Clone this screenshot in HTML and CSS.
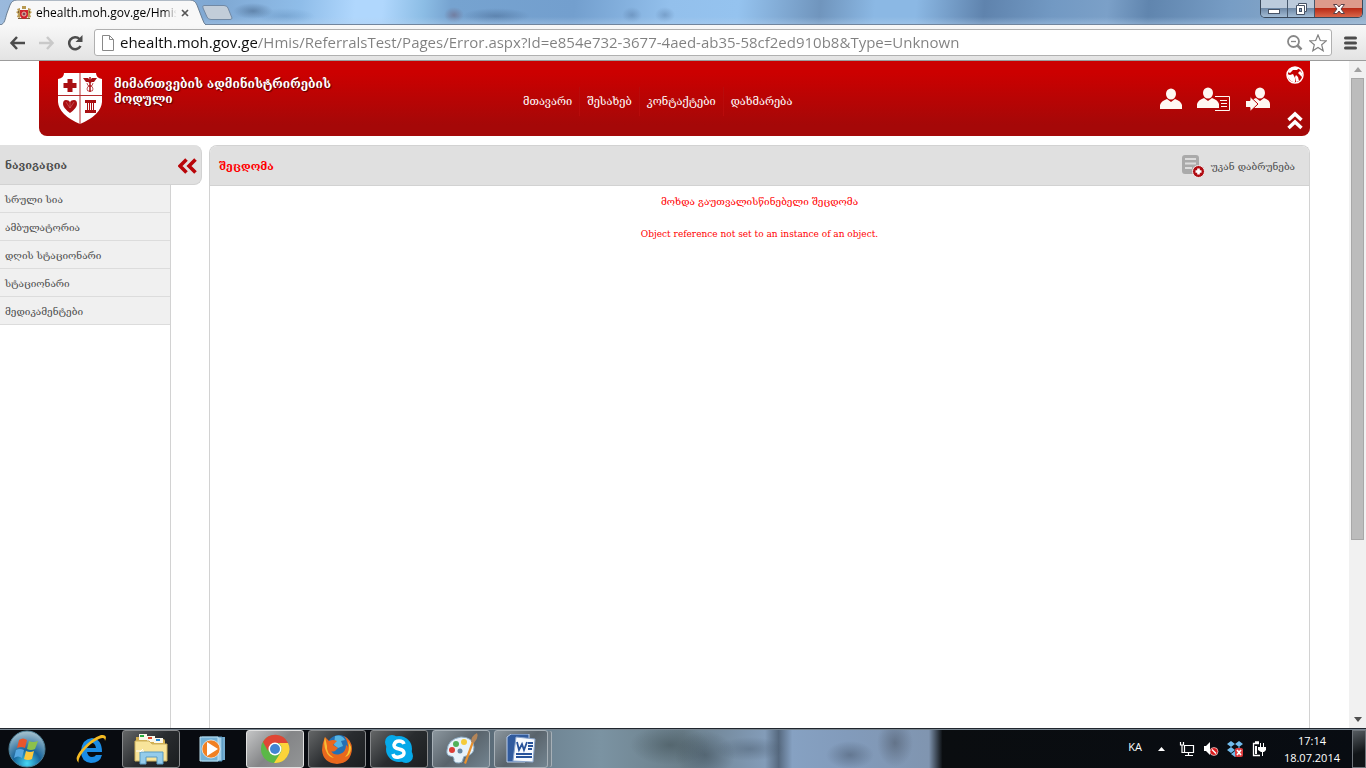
FILE: index.html
```html
<!DOCTYPE html>
<html lang="ka">
<head>
    <meta charset="UTF-8">
    <meta name="viewport" content="width=device-width, initial-scale=1.0">
    <title>ehealth.moh.gov.ge/Hmis</title>
    <link rel="stylesheet" href="styles.css">
</head>
<body>
    <!-- tab strip -->
    <div class="titlebar">
        <div class="tab">
            <svg class="tab-shape" viewBox="0 0 206 25" preserveAspectRatio="none">
                <path d="M0 25 C5 24 5 19 7 13 L10 5 Q12 0 17 0 H190 Q195 0 197 5 L202 18 Q204 24 206 25" fill="#f8f8f8" stroke="#697d92"/>
            </svg>
            <svg class="favicon" width="16" height="16" viewBox="0 0 16 16">
                <path d="M6 1h4v3H6zM1 4l3-1v10l-3-1 1-3-2-2 2-1zM15 4l-3-1v10l3-1-1-3 2-2-2-1z" fill="#b99a52"/>
                <path d="M2 6v2h1V6zm11 0v2h1V6zM2 13h12v1H2z" fill="#7c5c3c"/>
                <path d="M4 5h8v5q0 3-4 4-4-1-4-4z" fill="#d0232e"/>
                <circle cx="8" cy="9" r="2" fill="#7d4a58" stroke="#efb7a7"/>
            </svg>
            <span class="tab-title">ehealth.moh.gov.ge/Hmis</span>
            <button class="tab-close" aria-label="Close tab">
                <svg width="8" height="8" viewBox="0 0 8 8"><path d="M1 1l6 6M7 1L1 7" stroke="#555" stroke-width="1.700"/></svg>
            </button>
        </div>
        <button class="new-tab" aria-label="New tab">
            <svg width="32" height="15" viewBox="0 0 32 15"><path d="M2 .5H22Q25 .5 26 3L30 13Q30 14.500 28 14.500H9Q6 14.500 5 12L1 3Q0 .5 2 .5Z" fill="#c2cdd9" stroke="#7189a5"/></svg>
        </button>
        <div class="window-buttons">
            <button aria-label="Minimize"><svg width="14" height="14" viewBox="0 0 14 14"><rect x="1.500" y="7.500" width="11" height="4" fill="#fff" stroke="#475366"/></svg></button>
            <button aria-label="Restore"><svg width="14" height="14" viewBox="0 0 14 14"><path d="M4.500 1.500h8v8h-2v3h-8v-9h2z" fill="#fff" stroke="#475366"/><path d="M4.500 3.500h6v6" fill="none" stroke="#475366"/><rect x="5.500" y="6.500" width="2" height="3" fill="#89a0bb" stroke="#475366"/></svg></button>
            <button class="close" aria-label="Close"><svg width="14" height="14" viewBox="0 0 14 14"><path d="M1.500 2.500h3.500l2 2.500 2-2.500h3.500L9 7l3.500 4.500H9L7 9l-2 2.500H1.500L5 7z" fill="#fff" stroke="#5a4148"/></svg></button>
        </div>
    </div>

    <!-- toolbar -->
    <div class="toolbar">
        <button aria-label="Back"><svg width="17" height="16" viewBox="0 0 17 16"><path d="M8 2L2.500 8 8 14M3 8h13" fill="none" stroke="#4c4c4c" stroke-width="2.500"/></svg></button>
        <button aria-label="Forward"><svg width="17" height="16" viewBox="0 0 17 16"><path d="M9 2l5.500 6L9 14M14 8H1" fill="none" stroke="#c9c9c9" stroke-width="2.500"/></svg></button>
        <button aria-label="Reload"><svg width="17" height="16" viewBox="0 0 17 16"><path d="M12.500 4A6 6 0 1 0 13.500 11" fill="none" stroke="#4c4c4c" stroke-width="2.500"/><path d="M15.500 0v7H8.500z" fill="#4c4c4c"/></svg></button>
        <div class="omnibox">
            <svg width="12" height="16" viewBox="0 0 12 16"><path d="M.5 .5h7l4 4v11H.5zM7.500 .5v4h4" fill="#fff" stroke="#888"/></svg>
            <input class="url" type="text" aria-label="Address" value="ehealth.moh.gov.ge/Hmis/ReferralsTest/Pages/Error.aspx?Id=e854e732-3677-4aed-ab35-58cf2ed910b8&amp;Type=Unknown">
            <button aria-label="Zoom"><svg width="17" height="17" viewBox="0 0 17 17"><circle cx="7.500" cy="7.500" r="5.500" fill="none" stroke="#888" stroke-width="1.800"/><path d="M5 7.500h5" stroke="#888" stroke-width="1.300"/><path d="M11.500 11.500l4 4" stroke="#888" stroke-width="2.500"/></svg></button>
            <button aria-label="Bookmark"><svg width="18" height="18" viewBox="0 0 18 18"><path d="M9 1l2.300 5.500 6 .4-4.600 3.900 1.500 6L9 13.500l-5.200 3.300 1.500-6L.7 6.900l6-.4z" fill="#fff" stroke="#808080" stroke-width="1.200"/></svg></button>
        </div>
        <button class="menu" aria-label="Menu"><svg width="13" height="14" viewBox="0 0 13 14"><path d="M1.500 2h10M1.500 7h10M1.500 12h10" stroke="#4c4c4c" stroke-width="3" stroke-linecap="round"/></svg></button>
    </div>

    <div class="viewport">
        <div class="page">
            <header class="header">
                <svg class="logo" width="44" height="51" viewBox="0 0 44 51">
                    <path d="M6 0H38Q38 5 44 6V29Q43 42 22 51Q1 42 0 29V6Q6 5 6 0Z" fill="#fff"/>
                    <path d="M22 0v51M0 22.500h44" stroke="#b52a2c"/>
                    <path d="M9.500 6h5v4h4v5h-4v4h-5v-4h-4v-5h4z" fill="#a90f12"/>
                    <path d="M32 4v15" stroke="#a90f12" stroke-width="1.500"/>
                    <path d="M25 5h5l2 2 2-2h5l-3 4h-2l-2 1-2-1h-2z" fill="#a90f12"/>
                    <path d="M29 10q0 3 3 3t3 3-3 2M35 10q0 3-3 3t-3 3 3 2" fill="none" stroke="#a90f12" stroke-width=".7"/>
                    <path d="M12 40Q5 35 5 31q0-4 3-4 3 0 4 2 1-2 4-2t3 4q0 4-7 9z" fill="#a90f12"/>
                    <path d="M8 29l4 6M12 29v6M16 29l-4 6" fill="none" stroke="#d98082" stroke-width=".5"/>
                    <path d="M27 27h11v3H27zM27 37h11v3H27zM29 30h1v7h-1zM31 30h1v7h-1zM33 30h1v7h-1zM35 30h1v7h-1z" fill="#a90f12"/>
                </svg>
                <h1>მიმართვების ადმინისტრირების მოდული</h1>
                <nav class="top-nav">
                    <a href="#">მთავარი</a>
                    <a href="#">შესახებ</a>
                    <a href="#">კონტაქტები</a>
                    <a href="#">დახმარება</a>
                </nav>
                <div class="user-actions">
                    <a href="#" aria-label="User"><svg width="22" height="22" viewBox="0 0 22 22"><ellipse cx="11" cy="6" rx="5" ry="5.500"/><path d="M0 21v-4q1-4 7-6l4 3 4-3q6 2 7 6v4z"/></svg></a>
                    <a href="#" aria-label="Profile"><svg width="34" height="24" viewBox="0 0 34 24"><ellipse cx="11" cy="6" rx="5" ry="5.500"/><path d="M0 21v-4q1-4 7-6l4 3 4-3q6 2 7 6v4z"/><path d="M18 9.500h14.500v14H18M23 13.500h7M24 16.500h6M24 19.500h6" fill="none" stroke="#fff8f2"/></svg></a>
                    <a href="#" aria-label="Log out"><svg width="24" height="24" viewBox="0 0 24 24"><ellipse cx="14" cy="6" rx="5" ry="5.500"/><path d="M4 21v-5q1-3 6-5l4 3 4-3q6 2 6 6v4z"/><path d="M-1 13.500h5v-4l8 7.500-8 7.500v-4h-5z" stroke="#b50505"/></svg></a>
                </div>
                <div class="corner">
                    <button aria-label="Language"><svg width="18" height="18" viewBox="0 0 18 18"><circle cx="9" cy="9" r="8" fill="#c40202" stroke="#fff" stroke-width="1.500"/><path d="M2 6l3-4q4-2 8 0l-2 2H7L4 7zM1 8l3 1 3-1 2 4v4H7Q2 14 1 8zM9 11l1-2 2 2 1 4-3 1z" fill="#fff"/><path d="M12 7l2-2 2 2v4l-2-2z" fill="#fff"/></svg></button>
                    <button aria-label="Collapse header"><svg width="16" height="19" viewBox="0 0 16 19"><path d="M1.500 9L8 3l6.500 6M1.500 17L8 11l6.500 6" fill="none" stroke="#fff" stroke-width="3.500"/></svg></button>
                </div>
            </header>

            <div class="columns">
                <aside class="sidebar">
                    <div class="sidebar-head">
                        <h2>ნავიგაცია</h2>
                        <button aria-label="Collapse navigation"><svg width="19" height="16" viewBox="0 0 19 16"><path d="M8.500 1.500L2 8l6.500 6.500M17.500 1.500L11 8l6.500 6.500" fill="none" stroke="#b90509" stroke-width="3.600"/></svg></button>
                    </div>
                    <ul>
                        <li><a href="#">სრული სია</a></li>
                        <li><a href="#">ამბულატორია</a></li>
                        <li><a href="#">დღის სტაციონარი</a></li>
                        <li><a href="#">სტაციონარი</a></li>
                        <li><a href="#">მედიკამენტები</a></li>
                    </ul>
                </aside>
                <main class="content">
                    <div class="content-head">
                        <h2>შეცდომა</h2>
                        <a href="#">
                            <svg width="24" height="24" viewBox="0 0 24 24"><path d="M3 0h11q3 0 3 3v9H11v7H3q-3 0-3-3V3Q0 0 3 0z" fill="#aaa"/><path d="M3 4h11M3 8.500h11M3 13h7" stroke="#ddd" stroke-width="2"/><circle cx="16.500" cy="16.500" r="6" fill="#b00c12" stroke="#eee"/><path d="M16.500 13.500v6M13.500 16.500h6" stroke="#fff" stroke-width="2.600"/></svg>
                            <span>უკან დაბრუნება</span>
                        </a>
                    </div>
                    <div class="error">
                        <p>მოხდა გაუთვალისწინებელი შეცდომა</p>
                        <p class="detail">Object reference not set to an instance of an object.</p>
                    </div>
                </main>
            </div>
        </div>
        <div class="scrollbar">
            <button aria-label="Scroll up"><svg width="8" height="5" viewBox="0 0 8 5"><path d="M4 0l4 5H0z" fill="#a0a0a0"/></svg></button>
            <div class="track"><div class="thumb"></div></div>
            <button aria-label="Scroll down"><svg width="8" height="5" viewBox="0 0 8 5"><path d="M0 0h8L4 5z" fill="#505050"/></svg></button>
        </div>
    </div>

    <footer class="taskbar">
        <button class="start" aria-label="Start">
            <svg width="38" height="38" viewBox="0 0 38 38">
                <defs><radialGradient id="orb" cx=".5" cy=".9" r=".85"><stop offset="0" stop-color="#46d8f5"/><stop offset=".45" stop-color="#17649b"/><stop offset="1" stop-color="#9dbccb"/></radialGradient></defs>
                <circle cx="19" cy="19" r="18" fill="url(#orb)" stroke="#4c7f96"/>
                <path d="M11 10q4-3 8 0l-2 8q-4-2-8 0z" fill="#e8562b"/><path d="M21 11q4 2 9 0l-3 8q-4 2-8 0z" fill="#8cc04b"/>
                <path d="M8 20q4-2 8 0l-2 8q-4-3-8 0z" fill="#56a8e2"/><path d="M18 21q4 2 8 0l-2 8q-4 2-8 0z" fill="#fcc93c"/>
            </svg>
        </button>
        <button class="pinned" aria-label="Internet Explorer">
            <svg width="34" height="34" viewBox="0 0 34 34">
                <path d="M28 20H13q1 5 5 5 3 0 4-2h6q-2 8-11 8Q7 30 7 19 8 7 18 6q10 1 10 14zM13 16h9q-1-5-4-5t-5 5z" fill="#1a8ce5"/>
                <path d="M5 31Q-1 27 8 17 18 6 27 3q7-1 4 6 0-5-6-2Q16 11 9 20 3 28 5 31z" fill="#f4ba22"/>
            </svg>
        </button>
        <button class="task" aria-label="Explorer">
            <svg width="36" height="34" viewBox="0 0 36 34">
                <path d="M3 5h9l2 2h16q2 0 2 2v20H3z" fill="#d3af4e"/><path d="M6 2h8v6H6zM14 4h8v6h-8zM21 6h9v5h-9z" fill="#faf7e9"/><path d="M7 3h4v2H7z" fill="#26ad3c"/><path d="M15 5h4v2h-4z" fill="#dd4529"/><path d="M23 7h4v2h-4z" fill="#268ad8"/>
                <path d="M2 9h14l3 3h15v17H2z" fill="#f8e49a" stroke="#ceb15c"/><path d="M7 20h23v12h-6v-7H13v7H7z" fill="#94cceb" stroke="#5a9bc2"/><path d="M7 20l3-3M3 19h8" stroke="#fff"/>
            </svg>
        </button>
        <button class="pinned" aria-label="Media Player">
            <svg width="28" height="28" viewBox="0 0 28 28"><path d="M5 2h21v23H5z" fill="#75add0"/><path d="M3 2h20v24H3z" fill="#a4d1ea" stroke="#4f90ba"/><path d="M1 2h18v24H1z" fill="#73b1d6" stroke="#bfe2f1"/><circle cx="12" cy="14" r="9" fill="#f18022" stroke="#fff" stroke-width=".6"/><path d="M8 7l11 7-11 7z" fill="#fff"/></svg>
        </button>
        <button class="task active" aria-label="Chrome">
            <svg width="30" height="30" viewBox="0 0 30 30"><circle cx="15" cy="15" r="14" fill="#5bb847"/><path d="M3 8A14 14 0 0 1 28 9H15Q11 9 9 14l-1 3z" fill="#df4635"/><path d="M28 9A14 14 0 0 1 14 29l7-11q2-5-2-9z" fill="#fcd43a"/><circle cx="15" cy="15" r="6.500" fill="#fff"/><circle cx="15" cy="15" r="5" fill="#4285d2"/></svg>
        </button>
        <button class="task" aria-label="Firefox">
            <svg width="30" height="30" viewBox="0 0 30 30"><circle cx="17" cy="13" r="12" fill="#2370b5"/><path d="M13 2q7-2 10 4l-4 1 2 5-5 2-4-3z" fill="#55b4e2"/><path d="M3 3l4 4q4-2 8 0l-4 4 5 3-3 3q-3 1-4 0 3 5 9 3 6-2 6-9 2 1 2 3Q26 7 22 2q8 4 8 13-1 14-15 15Q1 29 0 16q0-6 3-13z" fill="#e9681d"/><path d="M3 3Q1 10 4 17q2 6 8 7-8-5-7-12z" fill="#f8bd36"/><path d="M26 7q3 10-3 16 6-2 6-10z" fill="#f8cb32"/></svg>
        </button>
        <button class="task" aria-label="Skype">
            <svg width="30" height="30" viewBox="0 0 30 30"><circle cx="15" cy="15" r="13" fill="#06a9e9"/><circle cx="8" cy="8" r="7" fill="#06a9e9"/><circle cx="22" cy="22" r="7" fill="#06a9e9"/><path d="M20 10q-1-3-5-3t-5 4q0 3 5 4t5 4-5 4-6-3" fill="none" stroke="#fff" stroke-width="3.500"/></svg>
        </button>
        <button class="task light" aria-label="Paint">
            <svg width="34" height="32" viewBox="0 0 34 32"><path d="M3 17Q4 6 17 4q12 0 13 10 0 8-8 9-3 0-3 3 0 4-4 4-6 0-5-4 0-3-4-3-4-1-3-6z" fill="#e7f2fa" stroke="#8baac2"/><circle cx="8" cy="17" r="3" fill="#dc3e37"/><circle cx="12" cy="11" r="3" fill="#50b15a"/><circle cx="20" cy="9" r="3" fill="#f5cb39"/><circle cx="16" cy="18" r="2.500" fill="#6685a0"/><path d="M28 8l2 1-8 22-2-1z" fill="#e9912e"/><path d="M27 9Q27 3 33 0q2 5-3 10z" fill="#b38559"/></svg>
        </button>
        <button class="task light stacked" aria-label="Word">
            <svg width="32" height="30" viewBox="0 0 32 30"><path d="M2 3l4-3h18v24l-4 4H2z" fill="#315b9e" stroke="#bed1ee"/><path d="M11 3l19 2-2 23-20-1z" fill="#f6f9fe" stroke="#8aa5cc"/><path d="M12 8l2 8 3-6 2 6 3-8M23 9h5M23 12h5M23 15h4M11 20h16M11 23h16" fill="none" stroke="#27529a" stroke-width="1.800"/></svg>
        </button>
        <div class="tray">
            <span class="lang">KA</span>
            <button aria-label="Hidden icons"><svg width="7" height="4" viewBox="0 0 7 4"><path d="M3.500 0L7 4H0z" fill="#fff"/></svg></button>
            <svg width="16" height="16" viewBox="0 0 16 16"><path d="M5.500 4.500h9v7h-9zM9.500 12v2M6 14.500h8M1.500 1v3h3V1M3 4v7.500h3" fill="none" stroke="#fff" stroke-width="1.200"/></svg>
            <svg width="16" height="16" viewBox="0 0 16 16"><path d="M1 5h2l4-4v13l-4-4H1z" fill="#fff"/><circle cx="11" cy="10.500" r="4" fill="#d9191b" stroke="#fff" stroke-width=".6"/><path d="M9 8.500l4 4" stroke="#fff" stroke-width="1.500"/></svg>
            <svg width="17" height="16" viewBox="0 0 17 16"><path d="M4 0l4 3-4 3-4-3zM12 0l4 3-4 3-4-3zM4 6l4 3-4 3-4-3zM12 6l4 3-4 3-4-3zM8 10l4 3-4 3-4-3z" fill="#71bced"/><rect x="8" y="7" width="8" height="9" rx="2" fill="#dd3b3d"/><path d="M10 9l4 5M14 9l-4 5" stroke="#fff" stroke-width="1.600"/></svg>
            <svg width="14" height="16" viewBox="0 0 14 16"><path d="M7 2.500H1.500v12H8M3 1h4" fill="none" stroke="#fff" stroke-width="1.300"/><path d="M3 5h2v8H3zM6 6h8v3l-2 2H9L6 9zM8 2h1v4H8zM11 2h1v4h-1zM10 11h1v4h-1z" fill="#fff"/></svg>
            <div class="clock"><span>17:14</span><span>18.07.2014</span></div>
            <button class="show-desktop" aria-label="Show desktop"></button>
        </div>
    </footer>
</body>
</html>
```
FILE: styles.css
```css
* {
    box-sizing: border-box;
}
body {
    display: flex;
    flex-direction: column;
    height: 100vh;
    margin: 0;
    overflow: hidden;
    background-color: #fff;
    font-family: "DejaVu Serif", serif;
    font-size: 10px;
    color: #4d4d4d;
}
button {
    display: flex;
    align-items: center;
    justify-content: center;
    padding: 0;
    border: none;
    background: none;
    cursor: pointer;
}
svg {
    display: block;
    flex: none;
}
a {
    color: inherit;
    text-decoration: none;
}
h1, h2, p, ul {
    margin: 0;
    padding: 0;
}

/* browser window */
.titlebar {
    display: flex;
    flex: none;
    height: 25px;
    border-bottom: 1px solid #71859d;
    background:
        linear-gradient(to bottom, transparent 70%, rgba(180, 208, 236, 0.4)),
        radial-gradient(ellipse 20px 8px at 253px 11px, rgba(60, 90, 125, 0.5), transparent),
        radial-gradient(ellipse 30px 8px at 285px 16px, rgba(80, 125, 170, 0.3), transparent),
        radial-gradient(ellipse 10px 8px at 454px 15px, rgba(110, 90, 115, 0.5), transparent),
        radial-gradient(ellipse 34px 8px at 496px 16px, rgba(60, 90, 130, 0.4), transparent),
        radial-gradient(ellipse 10px 8px at 632px 15px, rgba(60, 90, 130, 0.3), transparent),
        radial-gradient(ellipse 10px 8px at 665px 15px, rgba(60, 90, 130, 0.3), transparent),
        linear-gradient(95deg, #9ab9dc 0%, #7fa8d3 16%, #8fbde9 22%, #b0d7fd 26%, #b0d7fd 28%, #8cbde5 31%, #76a3d0 33%, #739fce 42%, #93c0ec 49%, #95c3ef 54%, #7095bd 60%, #8bb8e4 64%, #8bb8e4 67%, #5f83ad 72%, #7299c3 77%, #7ba0c8 81%, #6085ae 84%, #779dc5 90%, #94afc9 100%);
}
.tab {
    position: relative;
    display: flex;
    align-items: center;
    width: 206px;
    height: 25px;
    padding: 0 17px 0 16px;
}
.tab-shape {
    position: absolute;
    left: 0;
    top: 0;
    width: 100%;
    height: 100%;
}
.favicon, .tab-title, .tab-close {
    position: relative;
}
.tab-title {
    flex: 1;
    margin: 0 0 0 4px;
    overflow: hidden;
    white-space: nowrap;
    font-family: "Open Sans", sans-serif;
    font-size: 12px;
    color: #000;
    mask-image: linear-gradient(to right, #000 88%, transparent 97%);
}
.new-tab {
    align-self: center;
    margin-left: -4px;
}
.window-buttons {
    display: flex;
    height: 18px;
    margin: 0 3px 0 auto;
    border: 1px solid #39485b;
    border-top: none;
    border-radius: 0 0 5px 5px;
    overflow: hidden;
}
.window-buttons button {
    width: 27px;
    border-right: 1px solid #45576c;
    background: linear-gradient(to bottom, #bccbdc 45%, #6f89a7 50%, #a2bbd4);
}
.window-buttons .close {
    width: 47px;
    border: none;
    background: linear-gradient(to bottom, #dd9a8b 45%, #b92b17 50%, #d9674b);
}
.toolbar {
    display: flex;
    flex: none;
    align-items: center;
    gap: 12px;
    height: 36px;
    padding: 0 9px;
    border-bottom: 1px solid #9c9c9c;
    background: linear-gradient(to bottom, #f8f8f8, #e3e3e3);
}
.omnibox {
    display: flex;
    flex: 1;
    align-items: center;
    gap: 6px;
    height: 27px;
    padding: 0 4px 0 7px;
    margin-left: -2px;
    border: 1px solid #b0b0b0;
    border-radius: 3px;
    background-color: #fff;
}
.url {
    flex: 1;
    min-width: 0;
    padding: 0 0 2px;
    border: none;
    outline: none;
    font-family: "Open Sans", sans-serif;
    font-size: 15px;
    color: transparent;
    background: linear-gradient(to right, #111 137px, #808080 137px);
    -webkit-background-clip: text;
    background-clip: text;
}

/* page */
.viewport {
    display: flex;
    flex: 1;
    min-height: 0;
}
.page {
    display: flex;
    flex: 1;
    flex-direction: column;
    gap: 9px;
    min-width: 0;
}
.header {
    display: flex;
    flex: none;
    height: 75px;
    margin: 0 39px;
    padding-left: 19px;
    border-radius: 0 0 8px 8px;
    background: linear-gradient(to bottom, #cc0000 15%, #a50808 85%);
    color: #fff;
}
.logo {
    margin-top: 12px;
}
.header h1 {
    width: 225px;
    margin: 16px 0 0 12px;
    font-size: 12px;
    line-height: 15px;
    text-shadow: 1px 1px 1px #500;
}
.top-nav {
    display: flex;
    align-items: center;
    margin-left: 177px;
    height: 80px;
    font-size: 11px;
}
.top-nav a {
    padding: 8px 7px;
    border-right: 1px solid #b80b0b;
}
.top-nav a:last-child {
    border: none;
}
.user-actions {
    display: flex;
    align-items: center;
    gap: 15px;
    margin-left: auto;
    fill: #fff8f2;
}
.corner {
    display: flex;
    flex-direction: column;
    justify-content: space-between;
    align-items: center;
    margin: 5px 6px 6px 16px;
}
.columns {
    display: flex;
    flex: 1;
    gap: 7px;
    min-height: 0;
    padding-right: 39px;
}
.sidebar {
    display: flex;
    flex: none;
    flex-direction: column;
    width: 202px;
}
.sidebar-head {
    display: flex;
    align-items: center;
    justify-content: space-between;
    height: 40px;
    padding: 2px 4px 0 5px;
    border: solid #d2d2d2;
    border-width: 0 1px 1px 0;
    border-radius: 0 8px 8px 0;
    background-color: #e0e0e0;
}
.sidebar h2, .content h2 {
    font-size: 11px;
}
.sidebar ul {
    flex: 1;
    width: 171px;
    border-right: 1px solid #d2d2d2;
    list-style: none;
}
.sidebar li a {
    display: block;
    height: 28px;
    padding-left: 5px;
    border-bottom: 1px solid #dcdcdc;
    background-color: #f0f0f0;
    line-height: 29px;
}
.content {
    flex: 1;
    min-width: 0;
    border: 1px solid #d2d2d2;
    border-bottom: none;
    border-radius: 8px 8px 0 0;
}
.content-head {
    display: flex;
    align-items: center;
    justify-content: space-between;
    height: 40px;
    padding: 2px 14px 0 9px;
    border-bottom: 1px solid #d2d2d2;
    border-radius: 7px 7px 0 0;
    background-color: #e0e0e0;
}
.content-head h2 {
    color: #f00;
}
.content-head a {
    display: flex;
    align-items: center;
    gap: 5px;
}
.error {
    padding-top: 8px;
    text-align: center;
    line-height: 16px;
    color: #f00;
}
.error .detail {
    margin-top: 16px;
    font-family: "DejaVu Serif Condensed", "DejaVu Serif", serif;
}
.scrollbar {
    display: flex;
    flex-direction: column;
    width: 17px;
    background-color: #f1f1f1;
}
.scrollbar button {
    height: 17px;
}
.track {
    flex: 1;
    padding: 0 2px;
}
.thumb {
    height: 73%;
    border: 1px solid #a8a8a8;
    background-color: #bcbcbc;
}

/* taskbar */
.taskbar {
    display: flex;
    flex: none;
    align-items: center;
    height: 40px;
    border-top: 1px solid #20262e;
    box-shadow: inset 0 1px #77848f;
    background:
        radial-gradient(ellipse 40px 20px at 670px 16px, rgba(60, 75, 80, 0.5), transparent),
        radial-gradient(ellipse 30px 24px at 705px 26px, rgba(55, 70, 80, 0.5), transparent),
        radial-gradient(ellipse 35px 12px at 750px 20px, rgba(65, 82, 100, 0.4), transparent),
        radial-gradient(ellipse 24px 14px at 850px 26px, rgba(70, 85, 105, 0.5), transparent),
        radial-gradient(ellipse 18px 24px at 895px 14px, rgba(70, 80, 95, 0.5), transparent),
        linear-gradient(to right, #080b10 28%, #4d5b66 33%, #6f8594 40%, #7b93a2 44%, #6b7f8b 50%, #7f97b1 55%, #839cb8 56%, #56697f 57%, #86a1c2 58%, #829bbb 62%, #8095b0 68%, #0a0d10 69%, #080c12);
}
.start {
    width: 38px;
    margin: 0 16px 0 8px;
}
.pinned {
    width: 58px;
    height: 38px;
    margin-right: 2px;
}
.task {
    width: 58px;
    height: 38px;
    margin-right: 4px;
    border: 1px solid #87898b;
    border-radius: 3px;
    background: linear-gradient(135deg, #646667, #292c2f 50%, #1b1e20);
}
.task.active {
    margin-left: 2px;
    border-color: #e0e0e0;
    background: linear-gradient(135deg, #c4c5c6, #848587 50%, #939596);
}
.task.light {
    border-color: #a7b0b7;
    background: linear-gradient(135deg, #8b969e, #59636b 50%, #738490);
}
.task.stacked {
    width: 54px;
    box-shadow: 4px 0 0 -1px #717f89, 5px 0 0 -1px #a7b0b7;
}
.tray {
    display: flex;
    align-items: center;
    gap: 8px;
    height: 100%;
    margin-left: auto;
    font-family: "Open Sans", sans-serif;
    font-size: 11px;
    color: #fff;
}
.lang {
    margin: 0 8px 4px 0;
}
.tray button:not(.show-desktop) {
    margin-right: 6px;
}
.clock {
    display: flex;
    flex-direction: column;
    align-items: center;
    margin: 0 4px 0 10px;
    line-height: 17px;
}
.show-desktop {
    width: 14px;
    height: 38px;
    border: 1px solid #6e747a;
    background: linear-gradient(160deg, #555b60, #111518 60%);
}
```
